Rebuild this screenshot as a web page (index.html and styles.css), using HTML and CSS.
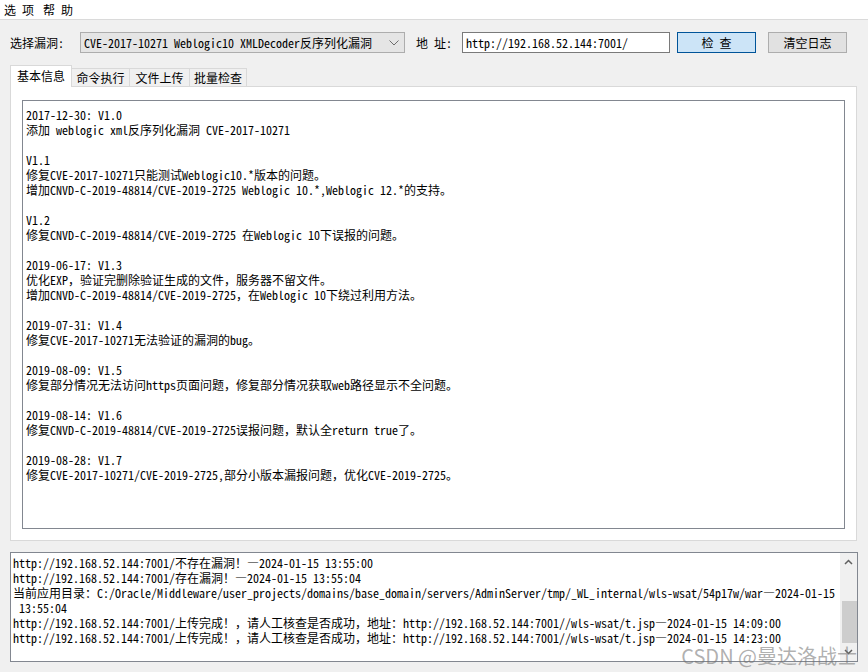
FILE: index.html
```html
<!DOCTYPE html>
<html lang="zh-CN">
<head>
    <meta charset="UTF-8">
    <title>Weblogic 漏洞检查</title>
    <link rel="stylesheet" href="styles.css">
</head>
<body>
    <div class="menubar">
        <span>选 项</span>
        <span>帮 助</span>
    </div>

    <div class="toolbar">
        <span class="label">选择漏洞:</span>
        <div class="combo">
            <span>CVE-2017-10271 Weblogic10 XMLDecoder反序列化漏洞</span>
            <svg width="10" height="6" viewBox="0 0 10 6"><polyline points="0.5,0.5 5,5 9.5,0.5" fill="none" stroke="#6d6d6d" stroke-width="1"/></svg>
        </div>
        <span class="label label-addr">地 址:</span>
        <input class="addr" type="text" value="http://192.168.52.144:7001/">
        <button class="btn btn-default">检 查</button>
        <button class="btn">清空日志</button>
    </div>

    <div class="tabs">
        <div class="tab-strip">
            <div class="tab active t1">基本信息</div>
            <div class="tab t2">命令执行</div>
            <div class="tab t3">文件上传</div>
            <div class="tab t4">批量检查</div>
        </div>
        <div class="tab-page">
            <!-- pontuação de largura cheia fica em .fw -->
            <div class="info">
                <div class="ln">2017-12-30: V1.0</div>
                <div class="ln">添加 weblogic xml反序列化漏洞 CVE-2017-10271</div>
                <div class="ln"></div>
                <div class="ln">V1.1</div>
                <div class="ln">修复CVE-2017-10271只能测试Weblogic10.*版本的问题。</div>
                <div class="ln">增加CNVD-C-2019-48814/CVE-2019-2725 Weblogic 10.*,Weblogic 12.*的支持。</div>
                <div class="ln"></div>
                <div class="ln">V1.2</div>
                <div class="ln">修复CNVD-C-2019-48814/CVE-2019-2725 在Weblogic 10下误报的问题。</div>
                <div class="ln"></div>
                <div class="ln">2019-06-17: V1.3</div>
                <div class="ln">优化EXP<span class="fw">，</span>验证完删除验证生成的文件<span class="fw">，</span>服务器不留文件。</div>
                <div class="ln">增加CNVD-C-2019-48814/CVE-2019-2725<span class="fw">，</span>在Weblogic 10下绕过利用方法。</div>
                <div class="ln"></div>
                <div class="ln">2019-07-31: V1.4</div>
                <div class="ln">修复CVE-2017-10271无法验证的漏洞的bug。</div>
                <div class="ln"></div>
                <div class="ln">2019-08-09: V1.5</div>
                <div class="ln">修复部分情况无法访问https页面问题<span class="fw">，</span>修复部分情况获取web路径显示不全问题。</div>
                <div class="ln"></div>
                <div class="ln">2019-08-14: V1.6</div>
                <div class="ln">修复CNVD-C-2019-48814/CVE-2019-2725误报问题<span class="fw">，</span>默认全return true了。</div>
                <div class="ln"></div>
                <div class="ln">2019-08-28: V1.7</div>
                <div class="ln">修复CVE-2017-10271/CVE-2019-2725,部分小版本漏报问题<span class="fw">，</span>优化CVE-2019-2725。</div>
            </div>
        </div>
    </div>

    <div class="log">
        <div class="log-text">
            <div class="ln">http://192.168.52.144:7001/不存在漏洞<span class="fw">！</span>—2024-01-15 13:55:00</div>
            <div class="ln">http://192.168.52.144:7001/存在漏洞<span class="fw">！</span>—2024-01-15 13:55:04</div>
            <div class="ln">当前应用目录<span class="fw">：</span>C:/Oracle/Middleware/user_projects/domains/base_domain/servers/AdminServer/tmp/_WL_internal/wls-wsat/54p17w/war—2024-01-15</div>
            <div class="ln"> 13:55:04</div>
            <div class="ln">http://192.168.52.144:7001/上传完成<span class="fw">！，</span>请人工核查是否成功<span class="fw">，</span>地址<span class="fw">：</span>http://192.168.52.144:7001//wls-wsat/t.jsp—2024-01-15 14:09:00</div>
            <div class="ln">http://192.168.52.144:7001/上传完成<span class="fw">！，</span>请人工核查是否成功<span class="fw">，</span>地址<span class="fw">：</span>http://192.168.52.144:7001//wls-wsat/t.jsp—2024-01-15 14:23:00</div>
        </div>
        <div class="scrollbar">
            <svg class="arrow" width="9" height="6" viewBox="0 0 9 6"><polyline points="1,5 4.5,1.5 8,5" fill="none" stroke="#606060" stroke-width="1.5"/></svg>
            <div class="track"><div class="thumb"></div></div>
            <svg class="arrow" width="9" height="6" viewBox="0 0 9 6"><polyline points="1,1 4.5,4.5 8,1" fill="none" stroke="#606060" stroke-width="1.5"/></svg>
        </div>
    </div>

    <div class="watermark">CSDN @曼达洛战士</div>
</body>
</html>
```

FILE: styles.css
```css
/* janela base */
body {
    margin: 0;
    width: 868px;
    height: 672px;
    overflow: hidden;
    position: relative;
    background-color: #f0f0f0;
    color: #000;
    font: 12px/15px "Noto Sans CJK SC", sans-serif;
    font-feature-settings: "hwid" 1; /* latim com meia largura, como no SimSun */
}
.fw {
    font-feature-settings: normal;
}
.ln {
    height: 15px;
    white-space: pre;
}

/* menu */
.menubar {
    height: 19px;
    line-height: 19px;
    background-color: #fff;
    border-bottom: 1px solid #dadada;
    padding-left: 4px;
    display: flex;
    gap: 9px;
}

/* linha de cima */
.toolbar {
    margin-top: 12px;
    padding-left: 10px;
    height: 21px;
    display: flex;
    align-items: center;
}
.label {
    width: 70px;
}
.label-addr {
    width: 46px;
    margin-left: 11px;
}
.combo {
    box-sizing: border-box;
    width: 325px;
    height: 21px;
    border: 1px solid #adadad;
    background-color: #e5e5e5;
    padding: 0 5px 0 3px;
    display: flex;
    align-items: center;
    justify-content: space-between;
}
.addr {
    box-sizing: border-box;
    width: 208px;
    height: 21px;
    margin: 0;
    padding: 0 3px;
    border: 1px solid #7a7a7a;
    background-color: #fff;
    font: inherit;
    color: #000;
    outline: none;
}
.btn {
    box-sizing: border-box;
    width: 79px;
    height: 21px;
    margin: 0 0 0 7px;
    padding: 0;
    border: 1px solid #adadad;
    background-color: #e1e1e1;
    font: inherit;
    color: #000;
}
.btn + .btn {
    margin-left: 12px;
}
.btn-default {
    background-color: #cce4f7;
    border-color: #005499;
}

/* abas */
.tabs {
    margin: 12px 0 0 10px;
    width: 847px;
}
.tab-strip {
    height: 21px;
    display: flex;
    align-items: flex-end;
}
.tab {
    box-sizing: border-box;
    height: 18px;
    line-height: 17px;
    margin-left: -1px;
    border: 1px solid #d9d9d9;
    border-bottom: none;
    background-color: #f0f0f0;
    text-align: center;
}
.tab.active {
    position: relative;
    z-index: 1;
    height: 22px;
    line-height: 20px;
    margin: 0 0 -1px 0;
    background-color: #fff;
}
.t1 { width: 62px; }
.t2 { width: 59px; }
.t3 { width: 61px; }
.t4 { width: 58px; }

.tab-page {
    box-sizing: border-box;
    height: 455px;
    padding: 13px 11px 11px 11px;
    border: 1px solid #d9d9d9;
    background-color: #fff;
}
.info {
    box-sizing: border-box;
    height: 100%;
    padding: 6px 3px;
    border: 1px solid #828790;
    overflow: hidden;
}

/* log */
.log {
    box-sizing: border-box;
    width: 848px;
    height: 110px;
    margin: 11px 0 0 10px;
    border: 1px solid #828790;
    background-color: #fff;
    display: flex;
}
.log-text {
    flex: 1;
    padding: 2px 2px;
    overflow: hidden;
}
.scrollbar {
    width: 17px;
    background-color: #f0f0f0;
    display: flex;
    flex-direction: column;
    align-items: center;
}
.arrow {
    margin: 6px 0;
}
.track {
    flex: 1;
    width: 100%;
    position: relative;
}
.thumb {
    position: absolute;
    left: 2px;
    right: 0;
    top: 30px;
    height: 42px;
    background-color: #cdcdcd;
}

.watermark {
    position: absolute;
    right: 11px;
    bottom: 6px;
    font: 20px/20px "Noto Sans CJK SC", sans-serif;
    color: rgba(110, 110, 110, 0.55);
}
```
